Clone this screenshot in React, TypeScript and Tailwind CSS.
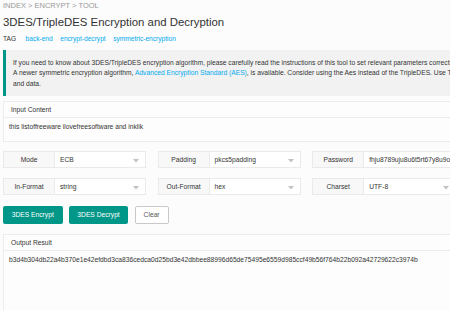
const links = ["back-end", "encrypt-decrypt", "symmetric-encryption"];

function Arrow() {
    return (
        <svg width="6" height="4" viewBox="0 0 6 4" className="absolute right-[6px] top-[7px]">
            <path d="M0 0 L6 0 L3 3.5 Z" fill="#c2c2c2" />
        </svg>
    );
}

function Field(props: { label: string; value: string; select?: boolean; wide?: boolean }) {
    const { label, value, select, wide } = props;
    return (
        <div className="flex h-[17px] w-[143px] shrink-0">
            <div className="w-[52px] shrink-0 border border-[#eaeaea] bg-[#f8f8f8] text-center text-[6.7px] leading-[15px]">
                {label}
            </div>
            <div
                className={
                    wide
                        ? "relative w-[92px] shrink-0 border border-l-0 border-[#eaeaea] bg-white pl-[5px] text-[6.7px] leading-[15px] whitespace-nowrap"
                        : "relative w-[91px] shrink-0 border border-l-0 border-[#eaeaea] bg-white pl-[5px] text-[6.7px] leading-[15px] whitespace-nowrap"
                }
            >
                {value}
                {select && <Arrow />}
            </div>
        </div>
    );
}

export default function App() {
    return (
        <div className="h-[310px] w-[450px] overflow-hidden bg-[#fcfcfc] font-['Liberation_Sans',Arial,sans-serif] text-[#333]">
            <div className="w-[560px] pl-[3px]">
                {/* Breadcrumb */}
                <div className="h-[12px] text-[7.5px] leading-[12px] text-[#999]">
                    INDEX &gt; ENCRYPT &gt; TOOL
                </div>

                {/* Title */}
                <h1 className="mt-[3px] h-[15px] text-[11.4px] leading-[15px] text-[#333]">
                    3DES/TripleDES Encryption and Decryption
                </h1>

                {/* Tags */}
                <div className="mt-[4px] flex h-[10px] items-center gap-[7.5px] text-[6.6px] leading-[10px]">
                    <span className="mr-[2px] text-[#333]">TAG</span>
                    {links.map((tag) => (
                        <a key={tag} className="text-[#01aaed]">
                            {tag}
                        </a>
                    ))}
                </div>

                {/* Notice */}
                <div className="mt-[6px] border-l-[3px] border-[#009688] bg-[#f2f2f2] pt-[8px] pb-[7px] pl-[7px] text-[6.7px] leading-[10.4px] whitespace-nowrap">
                    <p>
                        If you need to know about 3DES/TripleDES encryption algorithm, please carefully read the instructions of this tool to set relevant parameters correctly.
                    </p>
                    <p>
                        A newer symmetric encryption algorithm,{" "}
                        <a className="text-[#01aaed]">Advanced Encryption Standard (AES)</a>, is available. Consider using the Aes instead of the TripleDES. Use TripleDES only for legacy systems
                    </p>
                    <p>and data.</p>
                </div>

                {/* Input card */}
                <div className="mt-[5px] border border-[#ececec] bg-[#fdfdfd]">
                    <div className="h-[16px] border-b border-[#ececec] pl-[7px] text-[6.7px] leading-[16px]">
                        Input Content
                    </div>
                    <div className="h-[23px] pt-[4px] pl-[5px] text-[6.7px] leading-[10px]">
                        this listoffreeware ilovefreesoftware and inklik
                    </div>
                </div>

                {/* Options */}
                <div className="mt-[9px] flex gap-[11.6px]">
                    <Field label="Mode" value="ECB" select />
                    <Field label="Padding" value="pkcs5padding" select />
                    <Field label="Password" value="fhju8789uju8u6t5rt67y8u9o" wide />
                </div>
                <div className="mt-[10px] flex gap-[11.6px]">
                    <Field label="In-Format" value="string" select />
                    <Field label="Out-Format" value="hex" select />
                    <Field label="Charset" value="UTF-8" select wide />
                </div>

                {/* Actions */}
                <div className="mt-[11px] flex gap-[6.3px]">
                    <button className="h-[18px] w-[59.5px] rounded-[2px] bg-[#009688] text-[6.7px] text-white">
                        3DES Encrypt
                    </button>
                    <button className="h-[18px] w-[59.5px] rounded-[2px] bg-[#009688] text-[6.7px] text-white">
                        3DES Decrypt
                    </button>
                    <button className="h-[18px] w-[34px] rounded-[2px] border border-[#c9c9c9] bg-white text-[6.7px] text-[#555]">
                        Clear
                    </button>
                </div>

                {/* Output card */}
                <div className="mt-[10px] h-[90px] border border-[#ececec] bg-[#fdfdfd]">
                    <div className="h-[16px] border-b border-[#ececec] pl-[7px] text-[6.7px] leading-[16px]">
                        Output Result
                    </div>
                    <div className="pt-[4px] pl-[5px] text-[6.7px] leading-[10px]">
                        b3d4b304db22a4b370e1e42efdbd3ca836cedca0d25bd3e42dbbee88996d65de75495e6559d985ccf49b56f764b22b092a42729622c3974b
                    </div>
                </div>
            </div>
        </div>
    );
}
